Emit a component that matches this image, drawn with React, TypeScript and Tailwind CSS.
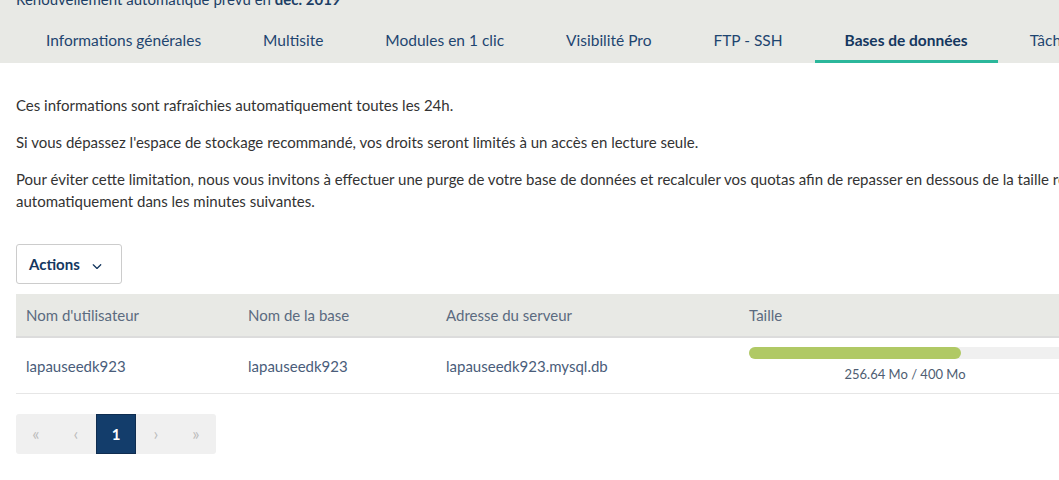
import { FaChevronDown } from "react-icons/fa6";

const tabs = [
	"Informations générales",
	"Multisite",
	"Modules en 1 clic",
	"Visibilité Pro",
	"FTP - SSH",
	"Bases de données",
	"Tâches planifiées",
];

const Tabs = () => {
	return (
		<div className="bg-[#e8e9e5]">
			<div className="h-[22px] pl-4 text-[15px] leading-[22px] -mt-[12px] text-[#1d3f66] whitespace-nowrap">
				Renouvellement automatique prévu en <b>déc. 2019</b>
			</div>
			<div className="flex gap-[2px] pl-4 pt-[13px] whitespace-nowrap">
				{tabs.map((t) => {
					const active = t === "Bases de données";
					return (
						<div
							key={t}
							className={
								active
									? "px-[30px] pt-[6px] pb-[8px] text-[15.5px] font-bold text-[#14375f] border-b-[3px] border-[#2bb79b]"
									: "px-[30px] pt-[6px] pb-[8px] text-[15.5px] text-[#1e4570] border-b-[3px] border-transparent"
							}
						>
							{t}
						</div>
					);
				})}
			</div>
		</div>
	);
};

const Pagination = () => {
	return (
		<div className="flex w-[200px] h-[40px] rounded-[3px] bg-[#f0f0f0] text-[#bdbdbd] text-[17px]">
			<div className="flex w-[40px] items-center justify-center">«</div>
			<div className="flex w-[40px] items-center justify-center">‹</div>
			<div className="flex w-[40px] items-center justify-center bg-[#133d6b] border border-[#0f2d50] text-white text-[15px] font-bold">
				1
			</div>
			<div className="flex w-[40px] items-center justify-center">›</div>
			<div className="flex w-[40px] items-center justify-center">»</div>
		</div>
	);
};

const App = () => {
	return (
		<div className="h-[480px] w-[1059px] overflow-hidden bg-white font-['Lato',sans-serif]">
			<div className="w-[1300px]">
				<Tabs />
				<div className="px-4 pt-[31px] text-[15px] leading-[22px] text-[#333333]">
					<p>Ces informations sont rafraîchies automatiquement toutes les 24h.</p>
					<p className="mt-[15px]">
						Si vous dépassez l'espace de stockage recommandé, vos droits seront limités à un accès en lecture seule.
					</p>
					<p className="mt-[15px] whitespace-nowrap">
						Pour éviter cette limitation, nous vous invitons à effectuer une purge de votre base de données et recalculer vos quotas afin de repasser en dessous de la taille
						recommandée. Vos droits seront rétablis
						<br />
						automatiquement dans les minutes suivantes.
					</p>
					<button className="mt-[32px] flex h-[40px] items-center gap-[12px] rounded-[3px] border border-[#cccccc] bg-white pl-[12px] pr-[19px] text-[15px] font-bold text-[#14375f]">
						Actions
						<FaChevronDown className="text-[10px] mt-[3px]" />
					</button>
					<div className="mt-[10px] w-[1200px]">
						<div className="flex h-[44px] items-center bg-[#e8e9e5] border-b-2 border-[#dcdcdc] text-[15px] text-[#5b6b80]">
							<div className="w-[222px] pl-[10px]">Nom d'utilisateur</div>
							<div className="w-[198px] pl-[10px]">Nom de la base</div>
							<div className="w-[303px] pl-[10px]">Adresse du serveur</div>
							<div className="pl-[10px]">Taille</div>
						</div>
						<div className="flex h-[56px] items-center border-b border-[#e6e6e6] text-[15px] text-[#4a5d7a]">
							<div className="w-[222px] pl-[10px]">lapauseedk923</div>
							<div className="w-[198px] pl-[10px]">lapauseedk923</div>
							<div className="w-[303px] pl-[10px]">lapauseedk923.mysql.db</div>
							<div className="pl-[10px] pt-[1px]">
								<div className="h-[12px] w-[330px] rounded-full bg-[#f0f0f0]">
									<div className="h-[12px] w-[212px] rounded-full bg-[#b0c965]" />
								</div>
								<div className="mt-[4px] w-[312px] text-center text-[13px] text-[#4e5d72]">256.64 Mo / 400 Mo</div>
							</div>
						</div>
					</div>
					<div className="mt-[20px]">
						<Pagination />
					</div>
				</div>
			</div>
		</div>
	);
};

export default App;
